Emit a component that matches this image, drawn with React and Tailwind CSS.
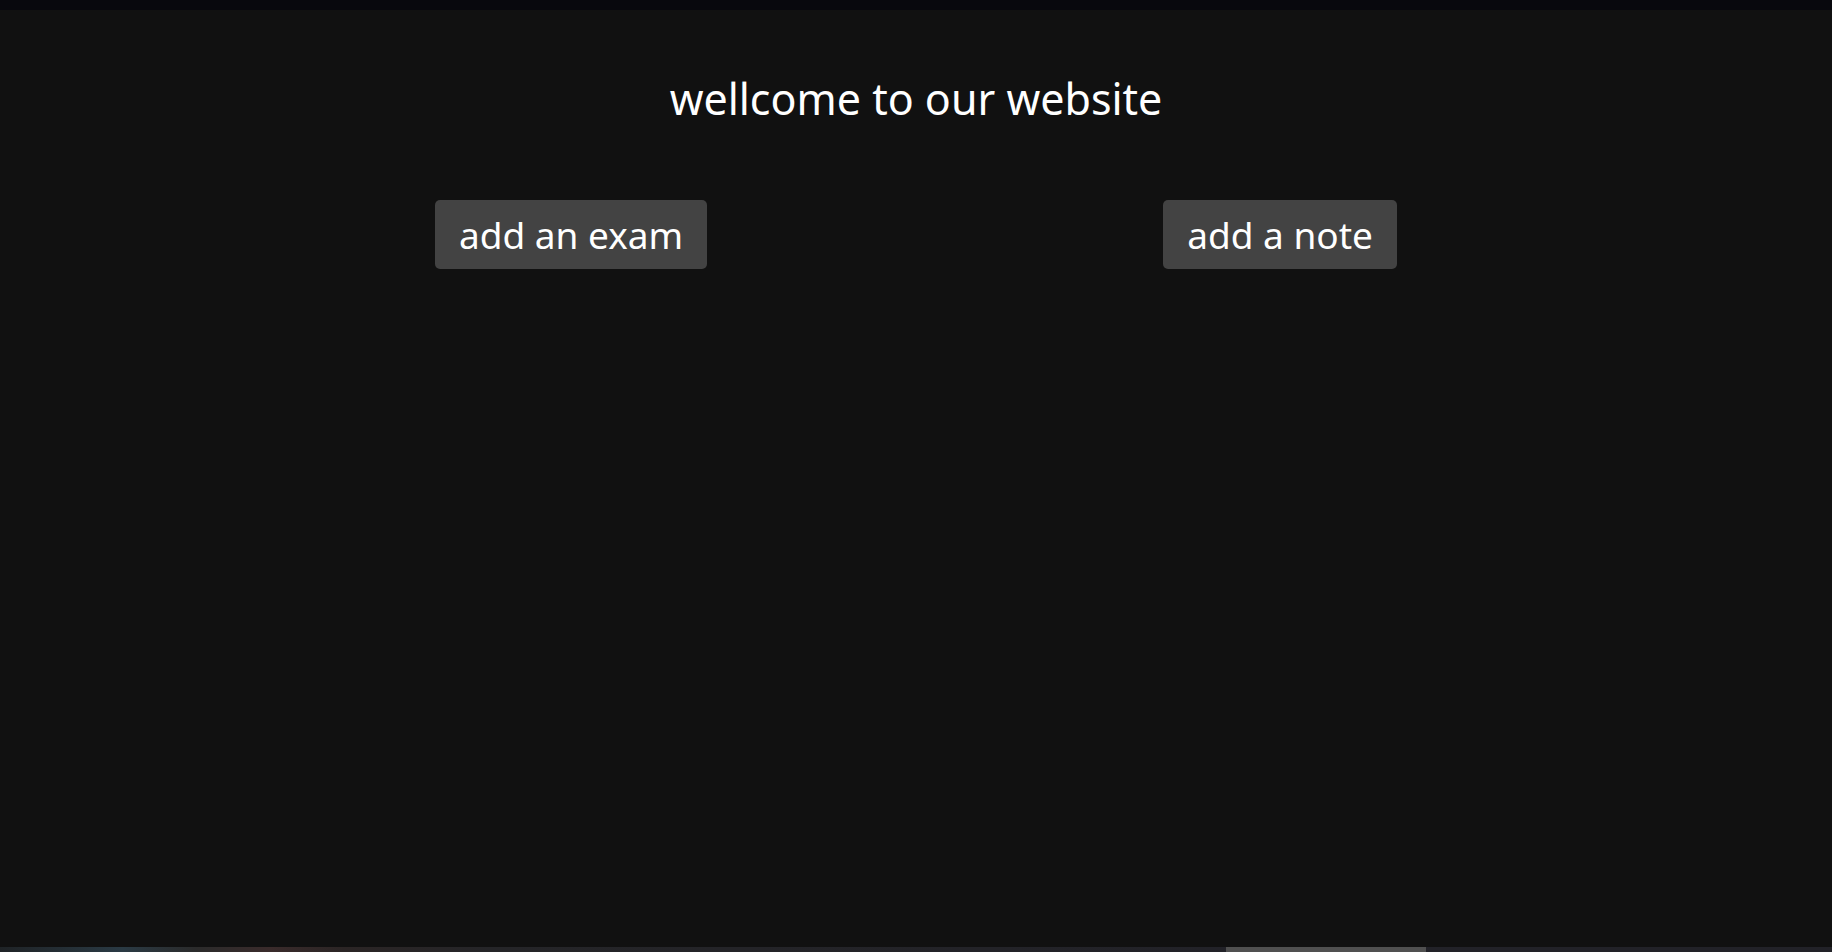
export default function App() {
  return (
    <div className="flex h-[952px] w-full flex-col bg-[#111111] text-white" style={{ fontFamily: '"Noto Sans", "Open Sans", sans-serif' }}>
      {/* top strip */}
      <div className="h-[10px] w-full bg-[#08080d]" />

      <div className="flex flex-1 flex-col">
        <h1 className="pt-[65px] text-center text-[43px] leading-[48px] font-normal">
          wellcome to our website
        </h1>

        <div className="mt-[77px] flex justify-center gap-[456px]">
          <button className="h-[69px] w-[272px] rounded-[5px] bg-[#434343] text-[37px] text-white">
            add an exam
          </button>
          <button className="h-[69px] w-[234px] rounded-[5px] bg-[#434343] text-[37px] text-white">
            add a note
          </button>
        </div>
      </div>

      {/* bottom strip */}
      <div className="flex h-[5px] w-full">
        <div className="h-full w-[1226px] bg-[linear-gradient(90deg,#1f2326_0%,#2a3a44_10%,#2b2b2b_16%,#3a2b2b_22%,#2b2525_28%,#252528_40%,#222228_100%)]" />
        <div className="h-full w-[200px] bg-[#505050]" />
        <div className="h-full flex-1 bg-[#222228]" />
      </div>
    </div>
  );
}
